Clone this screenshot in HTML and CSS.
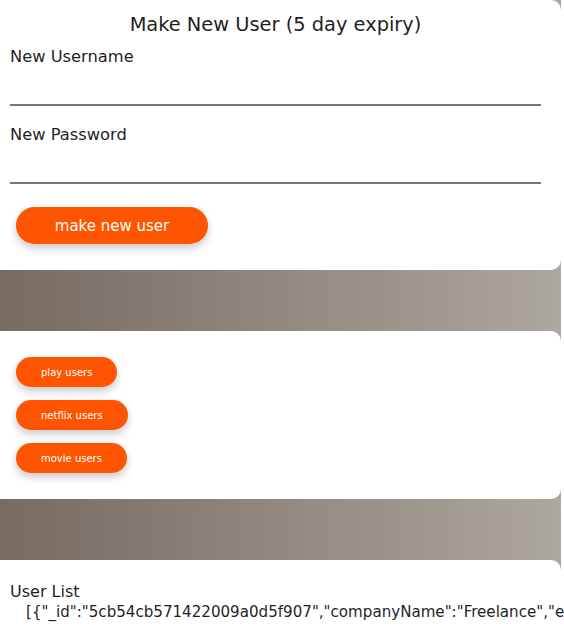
FILE: index.html
```html
<!DOCTYPE html>
<html>
<head>
<meta charset="utf-8">
<link rel="stylesheet" href="styles.css">
</head>
<body>
<div class="page">
  <section class="card card-form">
    <h1 class="title">Make New User (5 day expiry)</h1>
    <label class="field">
      <span class="field-label">New Username</span>
      <input class="field-input" type="text">
    </label>
    <label class="field">
      <span class="field-label">New Password</span>
      <input class="field-input" type="password">
    </label>
    <div class="actions">
      <button class="btn btn-large">make new user</button>
    </div>
  </section>
  <section class="card card-lists">
    <button class="btn btn-small">play users</button>
    <button class="btn btn-small">netflix users</button>
    <button class="btn btn-small">movie users</button>
  </section>
  <section class="card card-users">
    <div class="users-title">User List</div>
    <div class="users-json">[{"_id":"5cb54cb571422009a0d5f907","companyName":"Freelance","expiry":"2019-04-21T03:40:37.000Z","username":"play01"}]</div>
  </section>
</div>
</body>
</html>
```

FILE: styles.css
```css
* { box-sizing: border-box; }
html, body { margin: 0; padding: 0; background: #ffffff; }
body {
  font-family: "DejaVu Sans", "Liberation Sans", sans-serif;
  color: #1f1f1f;
  overflow: hidden;
}
.page {
  width: 561px;
  min-height: 700px;
  display: flex;
  flex-direction: column;
  gap: 61px;
  background: linear-gradient(to right, #776b62 0%, #8f857c 45%, #aca79f 100%);
}
.card {
  background: #ffffff;
  border-radius: 0 10px 10px 0;
}
.card-form {
  padding: 13px 20px 26px 10px;
  height: 270px;
}
.title {
  margin: 0;
  font-size: 19.4px;
  font-weight: normal;
  line-height: 24px;
  text-align: center;
}
.field { display: block; }
.field-label {
  display: block;
  font-size: 16.3px;
  line-height: 19px;
  margin-top: 10px;
}
.field-input {
  display: block;
  width: 531px;
  height: 40px;
  border: none;
  border-bottom: 2px solid #777777;
  outline: none;
  background: transparent;
  margin: 0;
  padding: 0;
}
.card-form .field + .field .field-label { margin-top: 19px; }
.actions { margin-top: 23px; padding-left: 6px; }
.btn {
  font-family: inherit;
  background: #ff5500;
  color: #ffffff;
  border: none;
  border-radius: 999px;
  box-shadow: 0 4px 8px rgba(0, 0, 0, 0.22);
  cursor: pointer;
}
.btn-large {
  width: 192px;
  height: 37px;
  font-size: 15px;
  padding: 0;
}
.card-lists {
  height: 168px;
  padding: 26px 0 0 16px;
  display: flex;
  flex-direction: column;
  align-items: flex-start;
  gap: 13px;
}
.btn-small {
  height: 30px;
  font-size: 10px;
  padding: 0 25px;
}
.card-users {
  padding: 22px 0 0 10px;
  height: 100px;
}
.users-title {
  font-size: 16px;
  line-height: 20px;
}
.users-json {
  font-size: 15.1px;
  line-height: 20px;
  padding-left: 16px;
  white-space: nowrap;
}
```
